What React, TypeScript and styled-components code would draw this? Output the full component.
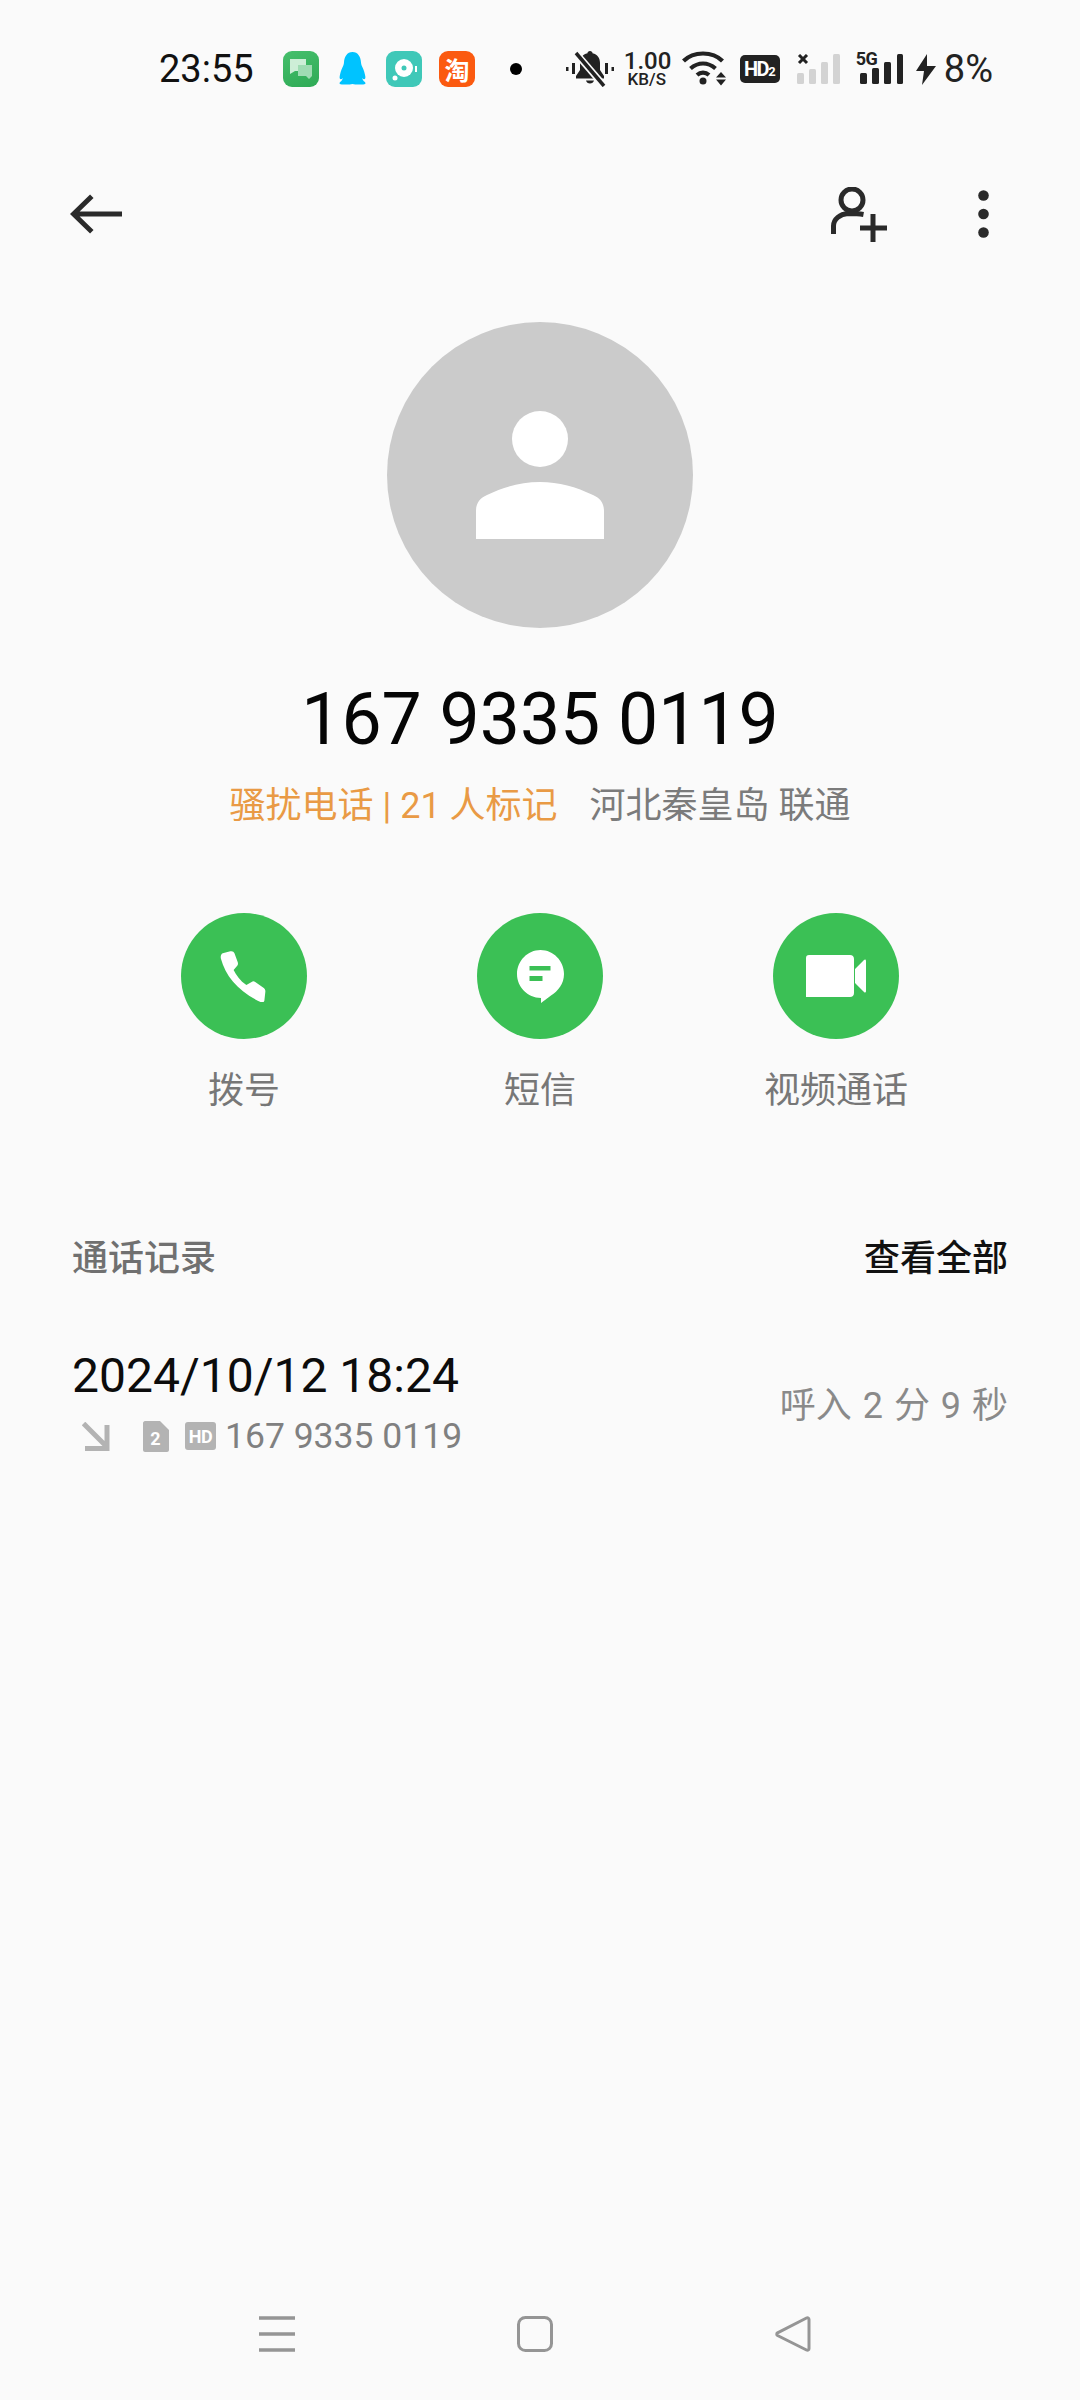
import React from 'react';
import styled, { createGlobalStyle } from 'styled-components';

const FONT = `Roboto, "Noto Sans CJK SC", sans-serif`;

const Global = createGlobalStyle`
  html, body { margin: 0; padding: 0; background: #fafafa; }
  body { font-family: ${FONT}; }
`;

const Screen = styled.div`
  width: 1080px;
  height: 2400px;
  background: #fafafa;
  display: flex;
  flex-direction: column;
  overflow: hidden;
`;

const StatusBar = styled.div`
  height: 70px;
  padding: 34px 87px 0 159px;
  display: flex;
  align-items: center;
`;

const Clock = styled.div`
  font-size: 38px;
  color: #111;
  width: 124px;
`;

const AppIcons = styled.div`
  display: flex;
  align-items: center;
  gap: 17px;
`;

const AppTile = styled.div<{ $bg: string }>`
  width: 36px;
  height: 36px;
  border-radius: 9px;
  background: ${({ $bg }) => $bg};
  color: #fff;
  font-size: 25px;
  font-weight: 700;
  display: flex;
  align-items: center;
  justify-content: center;
`;

const Dot = styled.div`
  width: 12px;
  height: 12px;
  border-radius: 50%;
  background: #000;
  margin-left: 35px;
`;

const StatusRight = styled.div`
  margin-left: auto;
  display: flex;
  align-items: center;
  color: #222;
`;

const Slot = styled.div<{ $left: number }>`
  margin-left: ${({ $left }) => $left}px;
  flex: none;
`;

const Speed = styled.div`
  width: 46px;
  margin-left: 10px;
  text-align: center;
  font-weight: 500;
  color: #222;
`;

const SpeedValue = styled.div`
  font-size: 24px;
  line-height: 21px;
  height: 21px;
`;

const SpeedUnit = styled.div`
  font-size: 17px;
  line-height: 15px;
  height: 15px;
`;

const HdTag = styled.div`
  width: 40px;
  height: 28px;
  border-radius: 5px;
  background: #222;
  color: #fff;
  font-size: 20px;
  font-weight: 700;
  line-height: 28px;
  text-align: center;
  margin-left: 13px;
  letter-spacing: -1.5px;
`;

const HdSub = styled.span`
  font-size: 13px;
  letter-spacing: 0;
`;

const FiveGBox = styled.div`
  position: relative;
  width: 47px;
  height: 30px;
  margin-left: 15px;
`;

const FiveGLabel = styled.span`
  position: absolute;
  left: 0;
  top: -4px;
  font-size: 18px;
  line-height: 18px;
  font-weight: 700;
  letter-spacing: -0.5px;
  color: #222;
`;

const Battery = styled.div`
  font-size: 38px;
  color: #222;
  margin-left: 8px;
`;

const TopBar = styled.div`
  height: 74px;
  margin-top: 73px;
  padding: 0 91px 0 70px;
  display: flex;
  align-items: center;
  justify-content: space-between;
`;

const TopActions = styled.div`
  display: flex;
  align-items: center;
  gap: 91px;
`;

const Profile = styled.div`
  display: flex;
  flex-direction: column;
  align-items: center;
  margin-top: 71px;
`;

const Avatar = styled.div`
  width: 306px;
  height: 306px;
  border-radius: 50%;
  background: #cbcbcb;
  display: flex;
  align-items: center;
  justify-content: center;
`;

const PhoneNumber = styled.div`
  font-size: 71.500px;
  line-height: 86px;
  color: #050505;
  margin-top: 49px;
`;

const Tagline = styled.div`
  font-size: 36px;
  line-height: 48px;
  margin-top: 19px;
  display: flex;
  gap: 32px;
`;

const Spam = styled.span`
  color: #e99a45;
`;

const Place = styled.span`
  color: #7b7b7b;
`;

const Actions = styled.div`
  display: grid;
  grid-template-columns: repeat(3, 296px);
  justify-content: center;
  margin-top: 83px;
`;

const Action = styled.div`
  display: flex;
  flex-direction: column;
  align-items: center;
`;

const ActionCircle = styled.div`
  width: 126px;
  height: 126px;
  border-radius: 50%;
  background: #3bc055;
  display: flex;
  align-items: center;
  justify-content: center;
`;

const ActionLabel = styled.div`
  font-size: 36px;
  line-height: 48px;
  color: #777;
  margin-top: 28px;
`;

const SectionHead = styled.div`
  display: flex;
  justify-content: space-between;
  align-items: center;
  padding: 0 72px;
  margin-top: 120px;
  font-size: 36px;
  line-height: 48px;
`;

const SectionTitle = styled.div`
  color: #707070;
  font-weight: 500;
`;

const SectionLink = styled.div`
  color: #111;
  font-weight: 500;
`;

const LogRow = styled.div`
  display: flex;
  justify-content: space-between;
  align-items: center;
  padding: 0 72px;
  margin-top: 64px;
`;

const LogTime = styled.div`
  font-size: 48px;
  line-height: 58px;
  color: #0c0c0c;
`;

const LogMeta = styled.div`
  display: flex;
  align-items: center;
  height: 40px;
  margin-top: 11px;
  font-size: 35.500px;
  color: #808080;
`;

const LogNumber = styled.span`
  margin-left: 9px;
`;

const LogSummary = styled.div`
  font-size: 36px;
  color: #8a8a8a;
  word-spacing: 2px;
`;

const NavBar = styled.div`
  margin-top: auto;
  height: 130px;
  box-sizing: border-box;
  padding: 46px 0 0 259px;
  display: flex;
  align-items: flex-start;
`;

const NavSlot = styled.div`
  width: 258px;
`;

const Svg = styled.svg`
  display: block;
`;

const QQ = () => (
  <Svg width="33" height="36" viewBox="0 0 36 36" preserveAspectRatio="none">
    <path fill="#00c3ff" d="M18 1c6 0 9 5 9.300 10.500.1 2 .7 3 1.700 5 1.300 2.600 2.500 6 3 9 .5 3-1.500 3.500-3.500 1.500.3 1.500 1.500 3 3 4 1.500 1.300.5 2.500-2 2.500H21c-1 0-2-.5-3-.5s-2 .5-3 .5H6.500c-2.500 0-3.500-1.200-2-2.500 1.500-1 2.700-2.500 3-4-2 2-4 1.500-3.500-1.500.5-3 1.700-6.400 3-9 1-2 1.600-3 1.700-5C9 6 12 1 18 1z" />
  </Svg>
);

const Bell = () => (
  <Svg width="48" height="36" viewBox="0 0 48 36">
    <path fill="#222" d="M24 0c1.500 0 2.500 1 2.500 2.200 5 1.200 7.500 4.800 7.500 9.800v7l4 6v2.500H10V25l4-6v-7c0-5 2.500-8.800 7.500-9.800C21.500 1 22.500 0 24 0zM20 29.500h8c-.5 1.800-2 3-4 3s-3.500-1.200-4-3z" />
    <path stroke="#fafafa" strokeWidth="7" d="M8 0l31 36" />
    <path stroke="#222" strokeWidth="3.500" d="M10 2l28 33" />
    <path fill="#222" d="M0 16h2.500v4H0zM6 12h3v11H6zM39 12h3v11h-3zM45.500 16H48v4h-2.500z" />
  </Svg>
);

const Wifi = () => (
  <Svg width="45" height="36" viewBox="0 0 45 36">
    <g fill="none" stroke="#222" strokeWidth="4.200">
      <path d="M1.500 10C6 5.500 13 2.500 21 2.500S36 5.500 40.500 10" />
      <path d="M8.500 17.500c3.500-3 8-5 12.500-5s9 2 12.500 5" />
      <path d="M15 24c1.500-1.300 3.700-2.300 6-2.300s4.500 1 6 2.300" />
    </g>
    <circle cx="21" cy="30" r="3.500" fill="#222" />
    <path fill="#222" d="M39 21l5 5.500H34zM34 28.500h10l-5 6z" />
  </Svg>
);

const WeakSignal = () => (
  <Svg width="44" height="30" viewBox="0 0 44 30">
    <path stroke="#222" strokeWidth="3" d="M2 1l8 8M10 1l-8 8" />
    {[11, 15, 22, 30].map((h, i) => (
      <rect key={i} x={i * 12} y={30 - h} width="7" height={h} rx="1.500" fill="#d3d3d3" />
    ))}
  </Svg>
);

const FiveG = () => (
  <FiveGBox>
    <FiveGLabel>5G</FiveGLabel>
    <Svg width="47" height="30" viewBox="0 0 47 30">
      <rect x="4" y="19" width="7" height="11" rx="1.500" fill="#222" />
      <rect x="16" y="14" width="7" height="16" rx="1.500" fill="#222" />
      <rect x="28" y="8" width="7" height="22" rx="1.500" fill="#222" />
      <rect x="41" y="0" width="6" height="30" rx="1.500" fill="#222" />
    </Svg>
  </FiveGBox>
);

const Bolt = () => (
  <Svg width="20" height="31" viewBox="0 0 20 31">
    <path fill="#222" d="M11 0L0 17h8L6 31 20 12h-9z" />
  </Svg>
);

const Back = () => (
  <Svg width="52" height="40" viewBox="0 0 52 40">
    <path fill="none" stroke="#2a2a2a" strokeWidth="5" strokeLinecap="square" d="M50 20H5M20 4L3.500 20 20 36" />
  </Svg>
);

const AddContact = () => (
  <Svg width="58" height="55" viewBox="0 0 58 55">
    <g fill="none" stroke="#2a2a2a" strokeWidth="5">
      <circle cx="23" cy="13" r="11" />
      <path d="M4.500 47v-8C4.500 32 11 27 19 26.500c5 0 10 0 15.500 1" />
      <path d="M44 27v28M31 41h27" />
    </g>
  </Svg>
);

const More = () => (
  <Svg width="11" height="48" viewBox="0 0 11 48">
    <circle cx="5.500" cy="5.500" r="5.300" fill="#2a2a2a" />
    <circle cx="5.500" cy="24" r="5.300" fill="#2a2a2a" />
    <circle cx="5.500" cy="42.500" r="5.300" fill="#2a2a2a" />
  </Svg>
);

const Person = () => (
  <Svg width="128" height="128" viewBox="0 0 128 128">
    <circle cx="64" cy="28" r="28" fill="#fff" />
    <path fill="#fff" d="M0 128V100c0-8 4-13 11-16 17-8 34-13 53-13s36 5 53 13c7 3 11 8 11 16v28z" />
  </Svg>
);

const PhoneIcon = () => (
  <Svg width="50" height="51" viewBox="2.500 1 50 54">
    <path fill="#fff" d="M5 3.500l8-2.200c2.200-.5 3.700.3 4.400 2.200l3.500 9.500c.5 1.500.2 2.800-.8 4l-3.600 4c2.500 5.300 7 11.500 13.500 16l5.600-3.300c1.300-.8 2.600-.7 3.800.2l8.700 6c1.500 1.100 2.200 2.500 2 4.200l-1 9.300c-.2 1.800-2 2.600-3.700 1.800C22 44.500 8 28 3 9c-.5-2.500.2-4.800 2-5.500z" />
  </Svg>
);

const MessageIcon = () => (
  <Svg width="47" height="53" viewBox="0 0 47 53">
    <path fill="#fff" d="M23.500 0C36.500 0 47 11 47 24c0 10-6 17-13 21.500L24 53v-5C10.500 47.700 0 37 0 24 0 11 10.500 0 23.500 0z" />
    <rect x="12.500" y="16" width="21" height="4.500" fill="#3bc055" />
    <rect x="12.500" y="26" width="13" height="5" fill="#3bc055" />
  </Svg>
);

const VideoIcon = () => (
  <Svg width="60" height="42" viewBox="0 0 60 42">
    <path fill="#fff" d="M3 0h41c2.500 0 4 1.500 4 4v34c0 2.500-1.500 4-4 4H0V3c0-2 1-3 3-3zM49 14l9-9c1-1 2-.5 2 1v30c0 1.500-1 2-2 1l-9-9z" />
  </Svg>
);

const InArrow = () => (
  <Svg width="28" height="29" viewBox="0 0 28 29">
    <path fill="none" stroke="#b3b3b3" strokeWidth="5" d="M1.500 1.500l23 23M25 3v23.500H3" />
  </Svg>
);

const SimIcon = () => (
  <Svg width="26" height="31" viewBox="0 0 26 31">
    <path fill="#b3b3b3" d="M2 0h15l9 9v20c0 1-1 2-2 2H2c-1 0-2-1-2-2V2C0 1 1 0 2 0z" />
    <text x="12.500" y="23.500" textAnchor="middle" fontFamily="Roboto, sans-serif" fontWeight="700" fontSize="18" fill="#fff">2</text>
  </Svg>
);

const HdBadge = () => (
  <Svg width="31" height="28" viewBox="0 0 31 28">
    <rect width="31" height="28" rx="3" fill="#b3b3b3" />
    <text x="15.500" y="20.500" textAnchor="middle" fontFamily="Roboto, sans-serif" fontWeight="700" fontSize="18" letterSpacing="-0.500" fill="#fff">HD</text>
  </Svg>
);

const MenuKey = () => (
  <Svg width="36" height="36" viewBox="0 0 36 36">
    <path stroke="#959595" strokeWidth="3.500" d="M0 2h36M0 18h36M0 34h36" />
  </Svg>
);

const HomeKey = () => (
  <Svg width="36" height="36" viewBox="0 0 36 36">
    <rect x="1.500" y="1.500" width="33" height="33" rx="7" fill="none" stroke="#959595" strokeWidth="3" />
  </Svg>
);

const BackKey = () => (
  <Svg width="36" height="36" viewBox="0 0 36 36">
    <path fill="none" stroke="#959595" strokeWidth="3" strokeLinejoin="round" d="M34 3.500v29c0 1.500-1.200 2.200-2.500 1.500L2.500 19.500c-1-.6-1-2 0-2.600L31.500 2c1.300-.7 2.500 0 2.500 1.500z" />
  </Svg>
);

export default function App() {
  return (
    <Screen>
      <Global />
      <StatusBar>
        <Clock>23:55</Clock>
        <AppIcons>
          <AppTile $bg="linear-gradient(160deg, #46bf6c, #2eaa55)">
            <Svg width="26" height="26" viewBox="0 0 26 26">
              <path fill="#cdeed7" d="M2 3h16v12H7l-5 3z" />
              <path fill="#9fdcb3" d="M10 9h14v11l-3 3-3-3h-8z" />
            </Svg>
          </AppTile>
          <QQ />
          <AppTile $bg="#3fc8b8">
            <Svg width="28" height="28" viewBox="0 0 28 28">
              <circle cx="14" cy="13" r="9" fill="#fff" />
              <circle cx="14" cy="13" r="2.500" fill="#3fc8b8" />
              <circle cx="5" cy="23" r="2.500" fill="#fff" />
              <rect x="25" y="11" width="2" height="6" fill="#fff" />
            </Svg>
          </AppTile>
          <AppTile $bg="#fb5a10">淘</AppTile>
        </AppIcons>
        <Dot />
        <StatusRight>
          <Bell />
          <Speed>
            <SpeedValue>1.00</SpeedValue>
            <SpeedUnit>KB/S</SpeedUnit>
          </Speed>
          <Slot $left={12}>
            <Wifi />
          </Slot>
          <HdTag>
            HD<HdSub>2</HdSub>
          </HdTag>
          <Slot $left={17}>
            <WeakSignal />
          </Slot>
          <FiveG />
          <Slot $left={13}>
            <Bolt />
          </Slot>
          <Battery>8%</Battery>
        </StatusRight>
      </StatusBar>
      <TopBar>
        <Back />
        <TopActions>
          <AddContact />
          <More />
        </TopActions>
      </TopBar>
      <Profile>
        <Avatar>
          <Person />
        </Avatar>
        <PhoneNumber>167 9335 0119</PhoneNumber>
        <Tagline>
          <Spam>骚扰电话 | 21 人标记</Spam>
          <Place>河北秦皇岛 联通</Place>
        </Tagline>
      </Profile>
      <Actions>
        <Action>
          <ActionCircle>
            <PhoneIcon />
          </ActionCircle>
          <ActionLabel>拨号</ActionLabel>
        </Action>
        <Action>
          <ActionCircle>
            <MessageIcon />
          </ActionCircle>
          <ActionLabel>短信</ActionLabel>
        </Action>
        <Action>
          <ActionCircle>
            <VideoIcon />
          </ActionCircle>
          <ActionLabel>视频通话</ActionLabel>
        </Action>
      </Actions>
      <SectionHead>
        <SectionTitle>通话记录</SectionTitle>
        <SectionLink>查看全部</SectionLink>
      </SectionHead>
      <LogRow>
        <div>
          <LogTime>2024/10/12 18:24</LogTime>
          <LogMeta>
            <Slot $left={10}>
              <InArrow />
            </Slot>
            <Slot $left={33}>
              <SimIcon />
            </Slot>
            <Slot $left={16}>
              <HdBadge />
            </Slot>
            <LogNumber>167 9335 0119</LogNumber>
          </LogMeta>
        </div>
        <LogSummary>呼入 2 分 9 秒</LogSummary>
      </LogRow>
      <NavBar>
        <NavSlot>
          <MenuKey />
        </NavSlot>
        <NavSlot>
          <HomeKey />
        </NavSlot>
        <NavSlot>
          <BackKey />
        </NavSlot>
      </NavBar>
    </Screen>
  );
}
